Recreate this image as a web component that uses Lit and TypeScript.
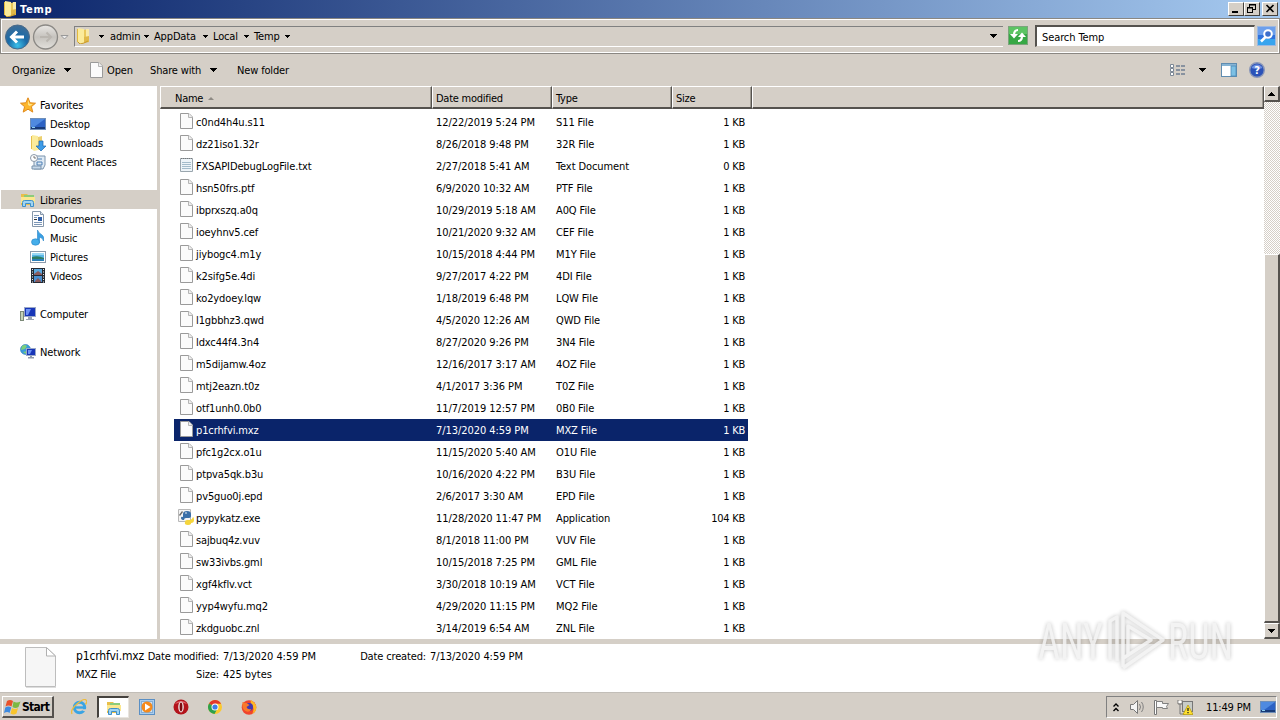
import { LitElement, css, html, svg } from "lit";
import { customElement, property } from "lit/decorators.js";
import { classMap } from "lit/directives/class-map.js";

const svgIcons: Record<string, any> = {
  folder: svg`
    <path d="M2 1h6v14l-6-1z" fill="#e2b93f"/>
    <path d="M3 0l6 1v14l-4 1-2-2z" fill="#fbeb9b"/>
    <path d="M9 2l4-1v12l-4 2z" fill="#e9c75a"/>
    <path d="M11 1h3v8h-3z" fill="#f8e9a8"/>
    <path d="M9 9l5-1v6l-5 1z" fill="#e0b848"/>
    <path d="M3 14l2 2 4-1 4-2" stroke="#c99a2a" fill="none"/>`,
  star: svg`
    <path d="M8 .8l2.1 5 5.4.4-4.1 3.5 1.4 5.4L8 12.2l-4.8 2.9 1.4-5.4L.5 6.200l5.400-.4z" fill="#fdb62b" stroke="#e08a1c"/>
    <path d="M8 3l1.300 3.800 3.500.4-3 1.800L8 8z" fill="#ffe58a"/>`,
  desktop: svg`
    <rect x="0.500" y="2.500" width="15" height="11" fill="#2c62c4" stroke="#6f8fb8"/>
    <path d="M1 3h14L4 11H1z" fill="#4f8ae0"/>
    <path d="M1 11h14v2H1z" fill="#183a78"/>
    <path d="M2 11h3v1H2z" fill="#8fd0f0"/>`,
  downloads: svg`
    <path d="M1 1h6v14l-6-1z" fill="#e6c04c"/>
    <path d="M2 0l6 1v14l-4 1-2-2z" fill="#fbeb9b"/>
    <path d="M8 2l4-1v12l-4 2z" fill="#ecd070"/>
    <path d="M9 6h4v5h3l-5 5-5-5h3z" fill="#3d9be8" stroke="#1e69b0" stroke-width=".7"/>`,
  recent: svg`
    <path d="M5 2h10v9l-2 4H4V6z" fill="#dfeaf4" stroke="#7b93ac"/>
    <path d="M7 5h5M7 8h5v3H7z" stroke="#4c7fb4" fill="none"/>
    <path d="M2 12h9v3H2z" fill="#c7d9ea" stroke="#7b93ac"/>
    <circle cx="4" cy="4" r="3.500" fill="#fff" stroke="#8b98a8"/>
    <path d="M4 2v2h2" stroke="#555" fill="none" stroke-width=".8"/>`,
  libraries: svg`
    <path d="M1 2h6l1 1h6v10H1z" fill="#e8bf4a"/>
    <path d="M4 3h10v2H4z" fill="#8ccc7a"/>
    <path d="M1 5h14v6H1z" fill="#fbe78f"/>
    <path d="M2.500 14.500v-4q0-2 2-2h7q2 0 2 2v4h-3v-3h-5v3z" fill="#9fd4f2" stroke="#3f8fc8"/>`,
  documents: svg`
    <path d="M2.500.5h8l3 3v12h-11z" fill="#fdfdfe" stroke="#8697aa"/>
    <path d="M10.500.5v3h3" fill="#dde5ee" stroke="#8697aa"/>
    <path d="M4 4.500h5M4 6.500h3M4 11.500h8M4 13.500h8" stroke="#7d97b6"/>
    <path d="M8 6h4v4H8z" fill="#2f5fa8"/><path d="M4 8.500h3" stroke="#333"/>`,
  music: svg`
    <path d="M7.500 0q1 3 4 4.500t2 6.500q-.5-3-4-4v6h-2z" fill="#3aa0e4" stroke="#2784c8" stroke-width=".6"/>
    <ellipse cx="5.500" cy="12" rx="4" ry="3.200" fill="#45aeea" stroke="#2784c8" stroke-width=".6"/>`,
  pictures: svg`
    <rect x=".5" y="2.500" width="15" height="11" fill="#fff" stroke="#8b9aab"/>
    <path d="M2 4h12v8H2z" fill="#58b6e6"/>
    <path d="M2 8q6-2 12 1v1H2z" fill="#2e7d64"/>
    <path d="M2 4h12v2H2z" fill="#9bd8f4"/><path d="M2 10h12v2H2z" fill="#2a7fb8"/>`,
  videos: svg`
    <path d="M1 0h14v15H1z" fill="#252a33"/>
    <path d="M4 1h8v6H4z" fill="#5aa8de"/><path d="M4 8h8v6H4z" fill="#4a8fd0"/>
    <path d="M4 6l4-3 4 3v1H4zM5 13l3-3 3 3v1H5z" fill="#8a5a5e"/>
    <path d="M2.500 1v14M13.500 1v14" stroke="#e8eef4" stroke-dasharray="1 1.500"/>`,
  computer: svg`
    <rect x=".5" y="5.500" width="3" height="9" fill="#c5d3b8" stroke="#7c8a78"/>
    <rect x="4.500" y="1.500" width="11" height="9" fill="#1836b8" stroke="#9aa8c8"/>
    <path d="M6 3h5L8 9H6z" fill="#6d92f4"/>
    <path d="M8 11h4v2h2v1H6v-1h2z" fill="#9aa4b4"/>`,
  network: svg`
    <circle cx="5.500" cy="5.500" r="5" fill="#3a9bdc" stroke="#2878b8" stroke-width=".6"/>
    <path d="M2 2q3-2 5 0L5 5 1 6zM3 8l4-1-1 3z" fill="#7cd07a"/>
    <rect x="6.500" y="4.500" width="9" height="7" fill="#1836b8" stroke="#9aa8c8"/>
    <path d="M8 6h4l-2 4H8z" fill="#6d92f4"/>
    <path d="M10 12h2v1h2v1.500H8V13h2z" fill="#8f9aac"/>`,
  file: svg`
    <path d="M1.500.5h8.500l3.500 3.500v11.500h-12z" fill="#fbfbfb" stroke="#9a9a9a"/>
    <path d="M9.500.5V4.500h4" fill="#eee" stroke="#b5b5b5"/>`,
  txt: svg`
    <path d="M1.500 1.500h12v13h-12z" fill="#eef4f8" stroke="#9aa6ae"/>
    <path d="M3 5.500h9M3 7.500h9M3 9.500h9M3 11.500h9" stroke="#a4bccb"/>
    <path d="M2 1.500h11" stroke="#777" stroke-dasharray="1 1"/>`,
  exe: svg`
    <path d="M.5.5h12v12H.5z" fill="#f4f4f4" stroke="#b8b8b8"/>
    <path d="M1 6l3-4 1 1-3 4z" fill="#666"/>
    <path d="M5 8V5q0-3 4-3t4 3v2q0 2-3 2H8q-2 0-2 2-3 0-3-2t2-1z" fill="#3a6fa8"/>
    <path d="M15 8q1 0 1 3t-3 3v1q-1 1-3 1-4 0-3-3 0-2 2-2h3q2 0 3-3z" fill="#f5d53c"/>
    <circle cx="8" cy="4" r=".8" fill="#fff"/>`,
  ie: svg`
    <circle cx="8.500" cy="8.500" r="5.200" fill="none" stroke="#39a4e4" stroke-width="3"/>
    <path d="M4 8.500h10" stroke="#39a4e4" stroke-width="2.400"/>
    <path d="M10 10.200h6v2.600l-4-1z" fill="#d5cfc7"/>
    <path d="M1 15Q-1 11 6 5t9-4q2 1-.5 4.500" fill="none" stroke="#eebc3c" stroke-width="1.300"/>`,
  player: svg`
    <rect x=".5" y=".5" width="15" height="15" fill="#a9cdee" stroke="#5a8fc4"/>
    <rect x="2.500" y="2.500" width="11" height="11" fill="#cfe2f4" stroke="#86aed4"/>
    <circle cx="8" cy="8" r="5.500" fill="#f58a1c"/>
    <path d="M6 4.500v7L11.500 8z" fill="#fff"/>`,
  opera: svg`
    <circle cx="8" cy="8" r="7.500" fill="#b3131b"/>
    <path d="M2 5a7 6 0 0 1 12 0q-6-3-12 0z" fill="#e0646a"/>
    <ellipse cx="8" cy="8" rx="2.800" ry="5.400" fill="#f0e4e4"/>
    <ellipse cx="8" cy="8" rx="1.400" ry="4.400" fill="#7c0a10"/>`,
  chrome: svg`
    <circle cx="8" cy="8" r="7" fill="#fbc92e"/>
    <path d="M8 8L2 4.400A7 7 0 0 1 14.100 4.700H8z" fill="#e2382c"/>
    <path d="M8 8L2 4.400A7 7 0 0 0 7.500 15l3-5.500z" fill="#2da14d"/>
    <circle cx="8" cy="8" r="3.500" fill="#fff"/><circle cx="8" cy="8" r="2.600" fill="#3d7ee8"/>`,
  firefox: svg`
    <circle cx="8" cy="8.500" r="7.300" fill="#f0442c"/>
    <path d="M10 1q5 3 5.300 7.500T11 15q3-5 0-9-2-2-1-5z" fill="#fdb827"/>
    <circle cx="8" cy="8" r="4" fill="#4338b0"/>
    <path d="M1.500 3q2 1 4 1l3 2-3 2q1 3 5 2-2 4-6 2T1.500 3z" fill="#f9792a"/>`,
  flag: svg`
    <path d="M1.500 1.500h2v14h-2z" fill="#fff" stroke="#777"/>
    <path d="M3.500 2.500h6v2h6l-2 3 1 2h-5v-1h-6z" fill="#f8f8f8" stroke="#808080"/>`,
  speaker: svg`
    <path d="M1.500 5.500h3l4-4v13l-4-4h-3z" fill="#f4f4f4" stroke="#777"/>
    <path d="M10.500 5q2 3 0 6M12.500 3q3.500 5 0 10" stroke="#808080" fill="none"/>`,
  lan: svg`
    <rect x="5.500" y="2.500" width="10" height="10" fill="#c8ccc8" stroke="#777"/>
    <path d="M1 1v4h4V1M3 5v10h5" stroke="#777" fill="none"/>
    <path d="M1.500 2h3v2h-3z" fill="#fff"/>
    <path d="M11 6l5 9.500H6z" fill="#ffe02e" stroke="#b39700" stroke-width=".7"/>
    <path d="M11 9v3M11 13v1.300" stroke="#222" stroke-width="1.300"/>`,
};

const icon = (name: string, cls = "icon") => html`
  <svg class=${cls} viewBox="0 0 16 16" width="16" height="16">${svgIcons[name]}</svg>
`;

// small triangle used by menus, breadcrumbs and scroll buttons
const arrow = (w: number, up = false) => html`
  <svg class="arrow" width=${w} height=${(w + 1) / 2} viewBox="0 0 ${w} ${(w + 1) / 2}" shape-rendering="crispEdges">
    <path d=${up ? `M0 ${(w + 1) / 2}L${w / 2} 0L${w} ${(w + 1) / 2}z` : `M0 0H${w}L${w / 2} ${(w + 1) / 2}z`} fill="#000" />
  </svg>
`;

const baseText = css`
  :host {
    font-family: "DejaVu Sans Condensed", "DejaVu Sans", sans-serif;
    font-stretch: condensed;
    font-size: 11px;
    letter-spacing: -0.25px;
    white-space: nowrap;
    color: #000;
  }

  * {
    box-sizing: border-box;
  }

  svg {
    display: block;
    flex: none;
  }
`;

@customElement("nav-pane")
export class NavPane extends LitElement {
  groups = [
    {
      name: "Favorites",
      icon: "star",
      items: [
        ["Desktop", "desktop"],
        ["Downloads", "downloads"],
        ["Recent Places", "recent"],
      ],
    },
    {
      name: "Libraries",
      icon: "libraries",
      selected: true,
      items: [
        ["Documents", "documents"],
        ["Music", "music"],
        ["Pictures", "pictures"],
        ["Videos", "videos"],
      ],
    },
    { name: "Computer", icon: "computer", items: [] },
    { name: "Network", icon: "network", items: [] },
  ];

  static styles = [
    baseText,
    css`
      :host {
        display: flex;
        flex-direction: column;
        gap: 19px;
        width: 157px;
        padding: 9px 0 0 1px;
        background: #fff;
        letter-spacing: -0.15px;
      }

      .row {
        display: flex;
        align-items: center;
        gap: 4px;
        height: 19px;
        padding-left: 19px;
      }

      .row span {
        padding-top: 2px;
      }

      .child {
        padding-left: 29px;
      }

      .selected {
        background: #d5cfc7;
      }
    `,
  ];

  render() {
    return this.groups.map(
      (group) => html`
        <div>
          <div class=${classMap({ row: true, selected: !!group.selected })}>
            ${icon(group.icon)}<span>${group.name}</span>
          </div>
          ${group.items.map(
            ([name, glyph]) => html`
              <div class="row child">${icon(glyph)}<span>${name}</span></div>
            `
          )}
        </div>
      `
    );
  }
}

@customElement("file-list")
export class FileList extends LitElement {
  @property({ type: String }) selected = "p1crhfvi.mxz";

  files = [
    ["c0nd4h4u.s11", "12/22/2019 5:24 PM", "S11 File", "1 KB"],
    ["dz21iso1.32r", "8/26/2018 9:48 PM", "32R File", "1 KB"],
    ["FXSAPIDebugLogFile.txt", "2/27/2018 5:41 AM", "Text Document", "0 KB"],
    ["hsn50frs.ptf", "6/9/2020 10:32 AM", "PTF File", "1 KB"],
    ["ibprxszq.a0q", "10/29/2019 5:18 AM", "A0Q File", "1 KB"],
    ["ioeyhnv5.cef", "10/21/2020 9:32 AM", "CEF File", "1 KB"],
    ["jiybogc4.m1y", "10/15/2018 4:44 PM", "M1Y File", "1 KB"],
    ["k2sifg5e.4di", "9/27/2017 4:22 PM", "4DI File", "1 KB"],
    ["ko2ydoey.lqw", "1/18/2019 6:48 PM", "LQW File", "1 KB"],
    ["l1gbbhz3.qwd", "4/5/2020 12:26 AM", "QWD File", "1 KB"],
    ["ldxc44f4.3n4", "8/27/2020 9:26 PM", "3N4 File", "1 KB"],
    ["m5dijamw.4oz", "12/16/2017 3:17 AM", "4OZ File", "1 KB"],
    ["mtj2eazn.t0z", "4/1/2017 3:36 PM", "T0Z File", "1 KB"],
    ["otf1unh0.0b0", "11/7/2019 12:57 PM", "0B0 File", "1 KB"],
    ["p1crhfvi.mxz", "7/13/2020 4:59 PM", "MXZ File", "1 KB"],
    ["pfc1g2cx.o1u", "11/15/2020 5:40 AM", "O1U File", "1 KB"],
    ["ptpva5qk.b3u", "10/16/2020 4:22 PM", "B3U File", "1 KB"],
    ["pv5guo0j.epd", "2/6/2017 3:30 AM", "EPD File", "1 KB"],
    ["pypykatz.exe", "11/28/2020 11:47 PM", "Application", "104 KB"],
    ["sajbuq4z.vuv", "8/1/2018 11:00 PM", "VUV File", "1 KB"],
    ["sw33ivbs.gml", "10/15/2018 7:25 PM", "GML File", "1 KB"],
    ["xgf4kflv.vct", "3/30/2018 10:19 AM", "VCT File", "1 KB"],
    ["yyp4wyfu.mq2", "4/29/2020 11:15 PM", "MQ2 File", "1 KB"],
    ["zkdguobc.znl", "3/14/2019 6:54 AM", "ZNL File", "1 KB"],
  ];

  static styles = [
    baseText,
    css`
      :host {
        display: block;
        background: #fff;
      }

      .head {
        display: grid;
        grid-template-columns: 272px 120px 120px 80px 1fr;
        height: 23px;
        margin-bottom: 2px;
      }

      .head div {
        display: flex;
        align-items: center;
        gap: 5px;
        padding: 2px 0 0 3px;
        background: #d5cfc7;
        border: solid;
        border-width: 1px 1px 2px 1px;
        border-color: #fff #55524e #55524e #fff;
        box-shadow: inset -1px 0 #9c9890;
      }

      .head div:first-child {
        padding-left: 14px;
      }

      .row {
        display: grid;
        grid-template-columns: 22px 240px 120px 120px 69px;
        align-items: center;
        width: 574px;
        height: 22px;
        margin-left: 14px;
      }

      .row svg {
        margin: -2px 0 0 5px;
      }

      .row .exe {
        margin-left: 4px;
      }

      .name {
        letter-spacing: -0.12px;
      }

      .date {
        letter-spacing: -0.06px;
      }

      .type {
        letter-spacing: -0.1px;
      }

      .size {
        text-align: right;
      }

      .selected {
        background: #0a246a;
        color: #fff;
      }
    `,
  ];

  glyph(name: string) {
    if (name.endsWith(".txt")) return icon("txt");
    if (name.endsWith(".exe")) return icon("exe", "exe");
    return icon("file");
  }

  render() {
    return html`
      <div class="head">
        <div>
          Name
          <svg width="6" height="3"><path d="M0 3L3 0L6 3z" fill="#8e8a84" /></svg>
        </div>
        <div>Date modified</div>
        <div>Type</div>
        <div>Size</div>
        <div></div>
      </div>
      ${this.files.map(
        ([name, date, type, size]) => html`
          <div class=${classMap({ row: true, selected: name === this.selected })}>
            ${this.glyph(name)}
            <span class="name">${name}</span>
            <span class="date">${date}</span>
            <span class="type">${type}</span>
            <span class="size">${size}</span>
          </div>
        `
      )}
    `;
  }
}

@customElement("task-bar")
export class TaskBar extends LitElement {
  apps = ["ie", "libraries", "player", "opera", "chrome", "firefox"];

  static styles = [
    baseText,
    css`
      :host {
        display: flex;
        align-items: center;
        height: 26px;
        padding: 0 3px 0 2px;
        background: #d5cfc7;
      }

      .start {
        display: flex;
        align-items: center;
        gap: 1px;
        width: 52px;
        height: 22px;
        margin-right: 9px;
        padding-left: 1px;
        border: solid;
        border-width: 1px 2px 2px 1px;
        border-color: #fff #55524e #55524e #fff;
        font-size: 12px;
        font-weight: bold;
        letter-spacing: -0.7px;
      }

      .app {
        display: flex;
        align-items: center;
        justify-content: center;
        width: 32px;
        height: 22px;
        margin-right: 2px;
      }

      .active {
        background: #fff;
        border: solid;
        border-width: 2px 1px 1px 2px;
        border-color: #45423e #e8e4de #e8e4de #45423e;
      }

      .tray {
        display: flex;
        align-items: center;
        gap: 8px;
        width: 171px;
        height: 22px;
        margin-left: auto;
        padding-left: 6px;
        border: 1px solid;
        border-color: #808080 #fff #fff #808080;
      }

      .chevron {
        margin-right: 2px;
      }

      .clock {
        width: 46px;
        margin-left: 5px;
        letter-spacing: -0.15px;
      }
    `,
  ];

  render() {
    return html`
      <div class="start">
        <svg width="17" height="16" viewBox="0 0 17 16">
          <path d="M3 2q3-2 6 0L7.500 7.500q-3-2-6 0z" fill="#e8512a" />
          <path d="M9.500 2.500q3 2 7 0L14.500 8q-3 2-6 0z" fill="#7cb843" />
          <path d="M1.300 8.500q3-2 6 0L5.500 14q-2-2-5.500 0z" fill="#3d8ae0" />
          <path d="M8 9q3 2 6 0l-1.500 5.500q-3 2-6 0z" fill="#f9c52c" />
        </svg>
        Start
      </div>
      ${this.apps.map(
        (app) => html`
          <div class=${classMap({ app: true, active: app === "libraries" })}>${icon(app)}</div>
        `
      )}
      <div class="tray">
        <svg class="chevron" width="6" height="9" viewBox="0 0 6 9">
          <path d="M.5 3.500L3 1l2.500 2.500M.5 8L3 5.500 5.500 8" stroke="#000" stroke-width="1.400" fill="none" />
        </svg>
        ${icon("speaker")}${icon("flag")}${icon("lan")}
        <span class="clock">11:49 PM</span>
        ${icon("desktop")}
      </div>
    `;
  }
}

@customElement("app-root")
export class AppRoot extends LitElement {
  crumbs = [
    ["admin", "c1"],
    ["AppData", "c2"],
    ["Local", "c3"],
    ["Temp", "c3"],
  ];

  static styles = [
    baseText,
    css`
      :host {
        position: relative;
        display: flex;
        flex-direction: column;
        width: 1280px;
        height: 720px;
        overflow: hidden;
        background: #d5cfc7;
      }

      .title {
        display: flex;
        align-items: center;
        height: 18px;
        padding: 0 2px;
        background: linear-gradient(90deg, #0a246a, #a6caf0);
        color: #fff;
        font-weight: bold;
        letter-spacing: 0.7px;
      }

      .title span {
        flex: 1;
        margin-left: 2px;
      }

      .win {
        width: 16px;
        height: 14px;
        background: #d5cfc7;
        border: 1px solid;
        border-color: #fff #45423e #45423e #fff;
      }

      .close {
        margin-left: 2px;
      }

      .address-bar {
        display: flex;
        align-items: center;
        height: 36px;
        padding: 0 2px 0 3px;
        border: 1px solid #8a8782;
        box-shadow: inset 1px 1px #fff, inset -1px -1px #fff;
      }

      .path {
        display: flex;
        align-items: center;
        width: 929px;
        height: 21px;
        margin-left: 5px;
        padding: 0 6px 0 0;
        border-top: 1px solid #808080;
        border-left: 1px solid #808080;
        border-bottom: 1px solid #fff;
      }

      .path .first {
        margin: 0 6px 0 8px;
      }

      .crumb {
        display: flex;
        align-items: center;
        justify-content: space-between;
        padding-right: 5px;
        letter-spacing: -0.15px;
      }

      .c1 {
        width: 44px;
      }

      .c2 {
        width: 59px;
      }

      .c3 {
        width: 41px;
      }

      .history {
        margin-left: auto;
      }

      .search {
        display: flex;
        align-items: center;
        flex: 1;
        height: 22px;
        margin: 0 2px 0 6px;
        padding: 1px 0 0 5px;
        background: #fff;
        border: solid;
        border-width: 2px 1px 1px 2px;
        border-color: #55524e #d5cfc7 #d5cfc7 #55524e;
        letter-spacing: -0.1px;
      }

      .toolbar {
        display: flex;
        align-items: center;
        height: 32px;
        padding: 0 15px 0 12px;
        letter-spacing: -0.15px;
      }

      .cmd {
        display: flex;
        align-items: center;
        gap: 9px;
      }

      .organize {
        width: 77px;
      }

      .open {
        gap: 2px;
        width: 61px;
      }

      .share {
        width: 87px;
      }

      .views {
        display: flex;
        align-items: center;
        margin-left: auto;
      }

      .views .arrow {
        margin: 0 15px 0 13px;
      }

      .views .pane {
        margin-right: 12px;
      }

      .body {
        display: flex;
        height: 553px;
      }

      .split {
        width: 3px;
        background: #d5cfc7;
      }

      file-list {
        flex: 1;
      }

      .scroll {
        display: flex;
        flex-direction: column;
        width: 16px;
        background: repeating-conic-gradient(#fff 0 25%, #d5cfc7 0 50%) 0 0 / 2px 2px;
      }

      .btn {
        display: flex;
        align-items: center;
        justify-content: center;
        height: 16px;
        background: #d5cfc7;
        border: solid;
        border-width: 1px 2px 2px 1px;
        border-color: #fff #55524e #55524e #fff;
      }

      .thumb {
        height: 369px;
        margin-top: auto;
      }

      .details {
        display: flex;
        height: 54px;
        padding: 3px 0 0 24px;
        background: #fff;
        border-top: 5px solid #d5cfc7;
        border-bottom: 1px solid #c2beb8;
        margin-bottom: 1px;
      }

      .info {
        display: grid;
        grid-template-columns: 71px 72px 139px 68px 1fr;
        grid-template-rows: 18px 18px;
        align-items: center;
        margin-left: 19px;
      }

      .info .label {
        text-align: right;
        letter-spacing: -0.15px;
      }

      .info .value {
        padding-left: 4px;
        letter-spacing: -0.05px;
      }

      .info .name {
        font-size: 12px;
        letter-spacing: -0.15px;
      }

      .watermark {
        position: absolute;
        left: 1030px;
        top: 600px;
        filter: drop-shadow(0 0 2px rgba(0, 0, 0, 0.28));
        opacity: 0.85;
      }
    `,
  ];

  render() {
    return html`
      <div class="title">
        ${icon("folder")}
        <span>Temp</span>
        <svg class="win" viewBox="0 0 14 12"><path d="M3 8h6v2H3z" /></svg>
        <svg class="win" viewBox="0 0 14 12">
          <path d="M4 1.500h7M4 2h7M4.500 1v3M10.500 1v6M8 6.500h3M2 4.500h6M2 5h6M2.500 4v6M7.500 4v6M2 9.500h6" stroke="#000" fill="none" />
        </svg>
        <svg class="win close" viewBox="0 0 14 12"><path d="M3.500 2l7 7M10.500 2l-7 7" stroke="#000" stroke-width="1.600" /></svg>
      </div>

      <div class="address-bar">
        <svg width="65" height="28" viewBox="0 0 65 28">
          <defs>
            <radialGradient id="back" cx=".5" cy=".85" r=".8">
              <stop offset="0" stop-color="#3cc0ea" />
              <stop offset=".5" stop-color="#1a6ba8" />
              <stop offset="1" stop-color="#3c6d98" />
            </radialGradient>
            <linearGradient id="fwd" x2="0" y2="1">
              <stop offset="0" stop-color="#e9e7e4" />
              <stop offset=".5" stop-color="#c6c3be" />
              <stop offset="1" stop-color="#e2e0dc" />
            </linearGradient>
          </defs>
          <circle cx="13.500" cy="15" r="12" fill="url(#back)" stroke="#4a6a88" />
          <path d="M20 15H8M13 9.500L7.500 15l5.500 5.500" stroke="#fff" stroke-width="3" fill="none" />
          <circle cx="41.500" cy="15" r="12" fill="url(#fwd)" stroke="#8b8985" stroke-width="1.300" />
          <path d="M36 15h11M42.500 10.500L47 15l-4.500 4.500" stroke="#bab6b0" stroke-width="2" fill="none" />
          <path d="M57 13.500h7l-3.500 3.500z" fill="#eee" stroke="#999" />
        </svg>
        <div class="path">
          ${icon("folder")}
          <div class="first">${arrow(5)}</div>
          ${this.crumbs.map(
            ([name, cls]) => html`<div class="crumb ${cls}">${name}${arrow(5)}</div>`
          )}
          <div class="history">${arrow(7)}</div>
        </div>
        <svg width="26" height="22" viewBox="0 0 26 22">
          <rect x="5.500" y="1.500" width="19" height="18" fill="#37a845" stroke="#7ba47c" />
          <path d="M6 2h18v7H6z" fill="#5cc463" />
          <path d="M15 5q-4 0-4 5" stroke="#fff" stroke-width="2.200" fill="none" />
          <path d="M7 9h8l-4 4.500z" fill="#fff" />
          <path d="M15 16q4 0 4-5" stroke="#fff" stroke-width="2.200" fill="none" />
          <path d="M15 12h8l-4-4.500z" fill="#fff" />
        </svg>
        <div class="search">Search Temp</div>
        <svg width="20" height="20" viewBox="0 0 20 20">
          <rect x=".5" y=".5" width="18" height="19" fill="#2f72dc" stroke="#9db8e0" />
          <path d="M1 1h17v8H1z" fill="#6c9fec" />
          <path d="M1 13h17v6H1z" fill="#38a4ee" />
          <circle cx="11" cy="8" r="3.800" stroke="#fff" stroke-width="2" fill="#3d6fcc" />
          <path d="M8.500 11L4 15.500" stroke="#fff" stroke-width="2.500" />
        </svg>
      </div>

      <div class="toolbar">
        <div class="cmd organize">Organize ${arrow(7)}</div>
        <div class="cmd open">${icon("file")}Open</div>
        <div class="cmd share">Share with ${arrow(7)}</div>
        <div class="cmd">New folder</div>
        <div class="views">
          <svg width="16" height="13" viewBox="0 0 16 13">
            <path d="M.5.5h3v3h-3zM.5 4.500h3v3h-3zM.5 8.500h3v3h-3z" fill="#fff" stroke="#7c8896" />
            <path d="M6 2h4M11 2h4M6 6h4M11 6h4M6 10h4M11 10h4" stroke="#6f7f92" stroke-width="1.300" />
          </svg>
          ${arrow(7)}
          <svg class="pane" width="16" height="14" viewBox="0 0 16 14">
            <rect x=".5" y=".5" width="15" height="13" fill="#fff" stroke="#5f8cb0" />
            <path d="M1 1h14v2H1z" fill="#86b4d4" />
            <path d="M10 3h5v10h-5z" fill="#7cc0e4" stroke="#4c8cb8" stroke-width=".8" />
          </svg>
          <svg width="16" height="16" viewBox="0 0 16 16">
            <circle cx="8" cy="8" r="7.300" fill="#2b52b8" stroke="#8a97b8" stroke-width="1.400" />
            <path d="M2.500 6a6 6 0 0 1 11 0q-5 2-11 0z" fill="#6d8fe0" />
            <text x="8" y="12" font-size="11" font-weight="bold" text-anchor="middle" fill="#fff">?</text>
          </svg>
        </div>
      </div>

      <div class="body">
        <nav-pane></nav-pane>
        <div class="split"></div>
        <file-list></file-list>
        <div class="scroll">
          <div class="btn">${arrow(7, true)}</div>
          <div class="btn thumb"></div>
          <div class="btn">${arrow(7)}</div>
        </div>
      </div>

      <div class="details">
        <svg width="33" height="41" viewBox="0 0 33 41">
          <path d="M1.500.5h21l9 8.500v30.500h-30z" fill="#f6f6f6" stroke="#bdbdbd" />
          <path d="M22.500.5V9h9z" fill="#fff" stroke="#b0b0b0" />
          <path d="M2 40.500h30" stroke="#ddd" />
        </svg>
        <div class="info">
          <span class="name">p1crhfvi.mxz</span>
          <span class="label">Date modified:</span>
          <span class="value">7/13/2020 4:59 PM</span>
          <span class="label">Date created:</span>
          <span class="value">7/13/2020 4:59 PM</span>
          <span>MXZ File</span>
          <span class="label">Size:</span>
          <span class="value">425 bytes</span>
        </div>
      </div>

      <task-bar></task-bar>

      <svg class="watermark" width="250" height="90" viewBox="0 0 250 90">
        <g fill="#f1f1f1" font-family="Roboto, sans-serif" font-size="50" letter-spacing="0">
          <text x="8" y="59" textLength="65" lengthAdjust="spacingAndGlyphs">ANY</text>
          <text x="138" y="59" textLength="65" lengthAdjust="spacingAndGlyphs">RUN</text>
        </g>
        <path d="M80 60V21l7-4v44M93 67V13l40 27-40 28M98 54V26l23 14-29 19" fill="none" stroke="#f1f1f1" stroke-width="3.500" stroke-linejoin="round" />
      </svg>
    `;
  }
}
